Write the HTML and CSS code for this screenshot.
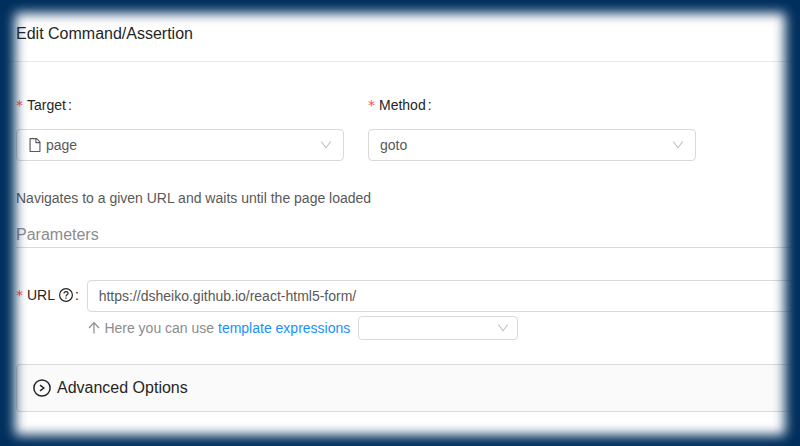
FILE: index.html
```html
<!DOCTYPE html>
<html lang="en">
<head>
<meta charset="utf-8">
<title>Edit Command/Assertion</title>
<link rel="stylesheet" href="styles.css">
</head>
<body>
<main class="dialog">
  <header class="dialog-header">Edit Command/Assertion</header>
  <div class="dialog-body">
    <div class="row">
      <div class="field">
        <div class="label"><span class="star">*</span>Target<span class="colon">:</span></div>
        <div class="select">
          <svg class="file" viewBox="64 64 896 896"><path d="M854.6 288.6L639.4 73.4c-6-6-14.1-9.4-22.6-9.4H192c-17.7 0-32 14.3-32 32v832c0 17.7 14.3 32 32 32h640c17.7 0 32-14.3 32-32V311.3c0-8.500-3.400-16.700-9.400-22.700zM790.200 326H602V137.800L790.200 326zm1.800 562H232V136h302v216a42 42 0 0 0 42 42h216v494z"/></svg>
          <span>page</span>
          <svg class="chevron" viewBox="64 64 896 896"><path d="M884 256h-75c-5.100 0-9.900 2.500-12.900 6.600L512 654.200 227.900 262.600c-3-4.100-7.800-6.600-12.900-6.600h-75c-6.500 0-10.300 7.400-6.500 12.700l352.600 486.100c12.800 17.600 39 17.600 51.700 0l352.600-486.100c3.900-5.300.1-12.700-6.400-12.700z"/></svg>
        </div>
      </div>
      <div class="field">
        <div class="label"><span class="star">*</span>Method<span class="colon">:</span></div>
        <div class="select">
          <span>goto</span>
          <svg class="chevron" viewBox="64 64 896 896"><path d="M884 256h-75c-5.100 0-9.900 2.500-12.900 6.600L512 654.200 227.900 262.600c-3-4.100-7.800-6.600-12.900-6.600h-75c-6.500 0-10.300 7.400-6.500 12.700l352.600 486.100c12.800 17.600 39 17.600 51.700 0l352.600-486.100c3.900-5.300.1-12.700-6.400-12.700z"/></svg>
        </div>
      </div>
    </div>
    <p class="description">Navigates to a given URL and waits until the page loaded</p>
    <h3 class="section-title">Parameters</h3>
    <div class="param">
      <div class="label"><span class="star">*</span>URL
        <svg class="help" viewBox="0 0 14 14"><circle cx="7" cy="7" r="6.4"/><path d="M5 5.500C5 4.300 5.900 3.600 7 3.600s2 .7 2 1.800c0 1.500-2 1.400-2 3"/><path d="M7 9.500v1.200"/></svg><span class="colon">:</span>
      </div>
      <div class="control">
        <div class="input">https://dsheiko.github.io/react-html5-form/</div>
        <div class="hint">
          <svg class="arrow" viewBox="0 0 14 14"><path d="M7 12.500V2M2 7l5-5.300L12 7"/></svg>
          <span>Here you can use <a>template expressions</a></span>
          <div class="select small">
            <svg class="chevron" viewBox="64 64 896 896"><path d="M884 256h-75c-5.100 0-9.900 2.500-12.900 6.600L512 654.200 227.900 262.600c-3-4.100-7.800-6.600-12.900-6.600h-75c-6.500 0-10.300 7.400-6.500 12.700l352.600 486.100c12.800 17.600 39 17.600 51.700 0l352.600-486.100c3.900-5.300.1-12.700-6.400-12.700z"/></svg>
          </div>
        </div>
      </div>
    </div>
    <div class="advanced">
      <svg class="expand" viewBox="0 0 18 18"><circle cx="9" cy="9" r="8.100"/><path d="M7 6.200L10.800 9 7 11.800"/></svg>
      <span>Advanced Options</span>
    </div>
  </div>
</main>
<div class="frame"></div>
</body>
</html>
```

FILE: styles.css
```css
* { box-sizing: border-box; }
body {
  margin: 0;
  height: 446px;
  overflow: hidden;
  background: #fff;
  color: #595959;
  font: 14px/22px "Liberation Sans", Arial, sans-serif;
}
svg { flex: none; fill: currentColor; }
.dialog { width: 840px; }
.dialog-header {
  height: 62px;
  padding: 23px 16px 0;
  border-bottom: 1px solid #e8e8e8;
  color: #262626;
  font-size: 16px;
}
.dialog-body { padding: 27px 16px 0; }
.row { display: flex; gap: 24px; }
.field { width: 328px; }
.label { display: flex; align-items: center; height: 32px; color: #262626; }
.field .label { margin-bottom: 8px; }
.star { margin-right: 4px; color: #ff4d4f; font-family: "DejaVu Sans", sans-serif; font-size: 14px; }
.colon { margin-left: 2px; }
.select {
  display: flex;
  align-items: center;
  height: 32px;
  padding: 0 11px;
  border: 1px solid #d9d9d9;
  border-radius: 4px;
  background: #fff;
}
.file { width: 14px; height: 14px; margin-right: 4px; }
.chevron { width: 12px; height: 12px; margin-left: auto; color: #bfbfbf; }
.description { margin: 26px 0 0; }
.section-title {
  height: 27px;
  margin: 12px 0 32px;
  border-bottom: 1px solid #d9d9d9;
  color: #8c8c8c;
  font-size: 16px;
  font-weight: 400;
  line-height: 28px;
}
.param { display: flex; }
.param .label { width: 70.700px; height: 30px; }
.help { width: 14px; height: 14px; margin-left: 4px; }
.help, .arrow, .expand { fill: none; stroke: currentColor; stroke-width: 1.2; }
.control { flex: 1; }
.input {
  height: 32px;
  padding: 0 11px;
  border: 1px solid #d9d9d9;
  border-radius: 4px;
  line-height: 30px;
}
.hint { display: flex; align-items: center; height: 24px; margin-top: 4px; color: #8c8c8c; }
.hint a { color: #1890ff; }
.arrow { width: 14px; height: 14px; margin-right: 3.700px; }
.small { width: 160px; height: 24px; margin-left: 7.700px; padding: 0 8px; }
.advanced {
  display: flex;
  align-items: center;
  height: 48px;
  margin-top: 24px;
  padding: 0 16px;
  border: 1px solid #d9d9d9;
  border-radius: 4px;
  background: #fafafa;
  color: #262626;
  font-size: 16px;
}
.expand { width: 18px; height: 18px; margin-right: 6px; stroke-width: 1.5; }
/* Soft navy vignette laid over the page edges */
.frame {
  position: absolute;
  inset: -2px 0 -4px;
  box-shadow: inset 0 0 12px 15px #002f5d;
  pointer-events: none;
}
```
